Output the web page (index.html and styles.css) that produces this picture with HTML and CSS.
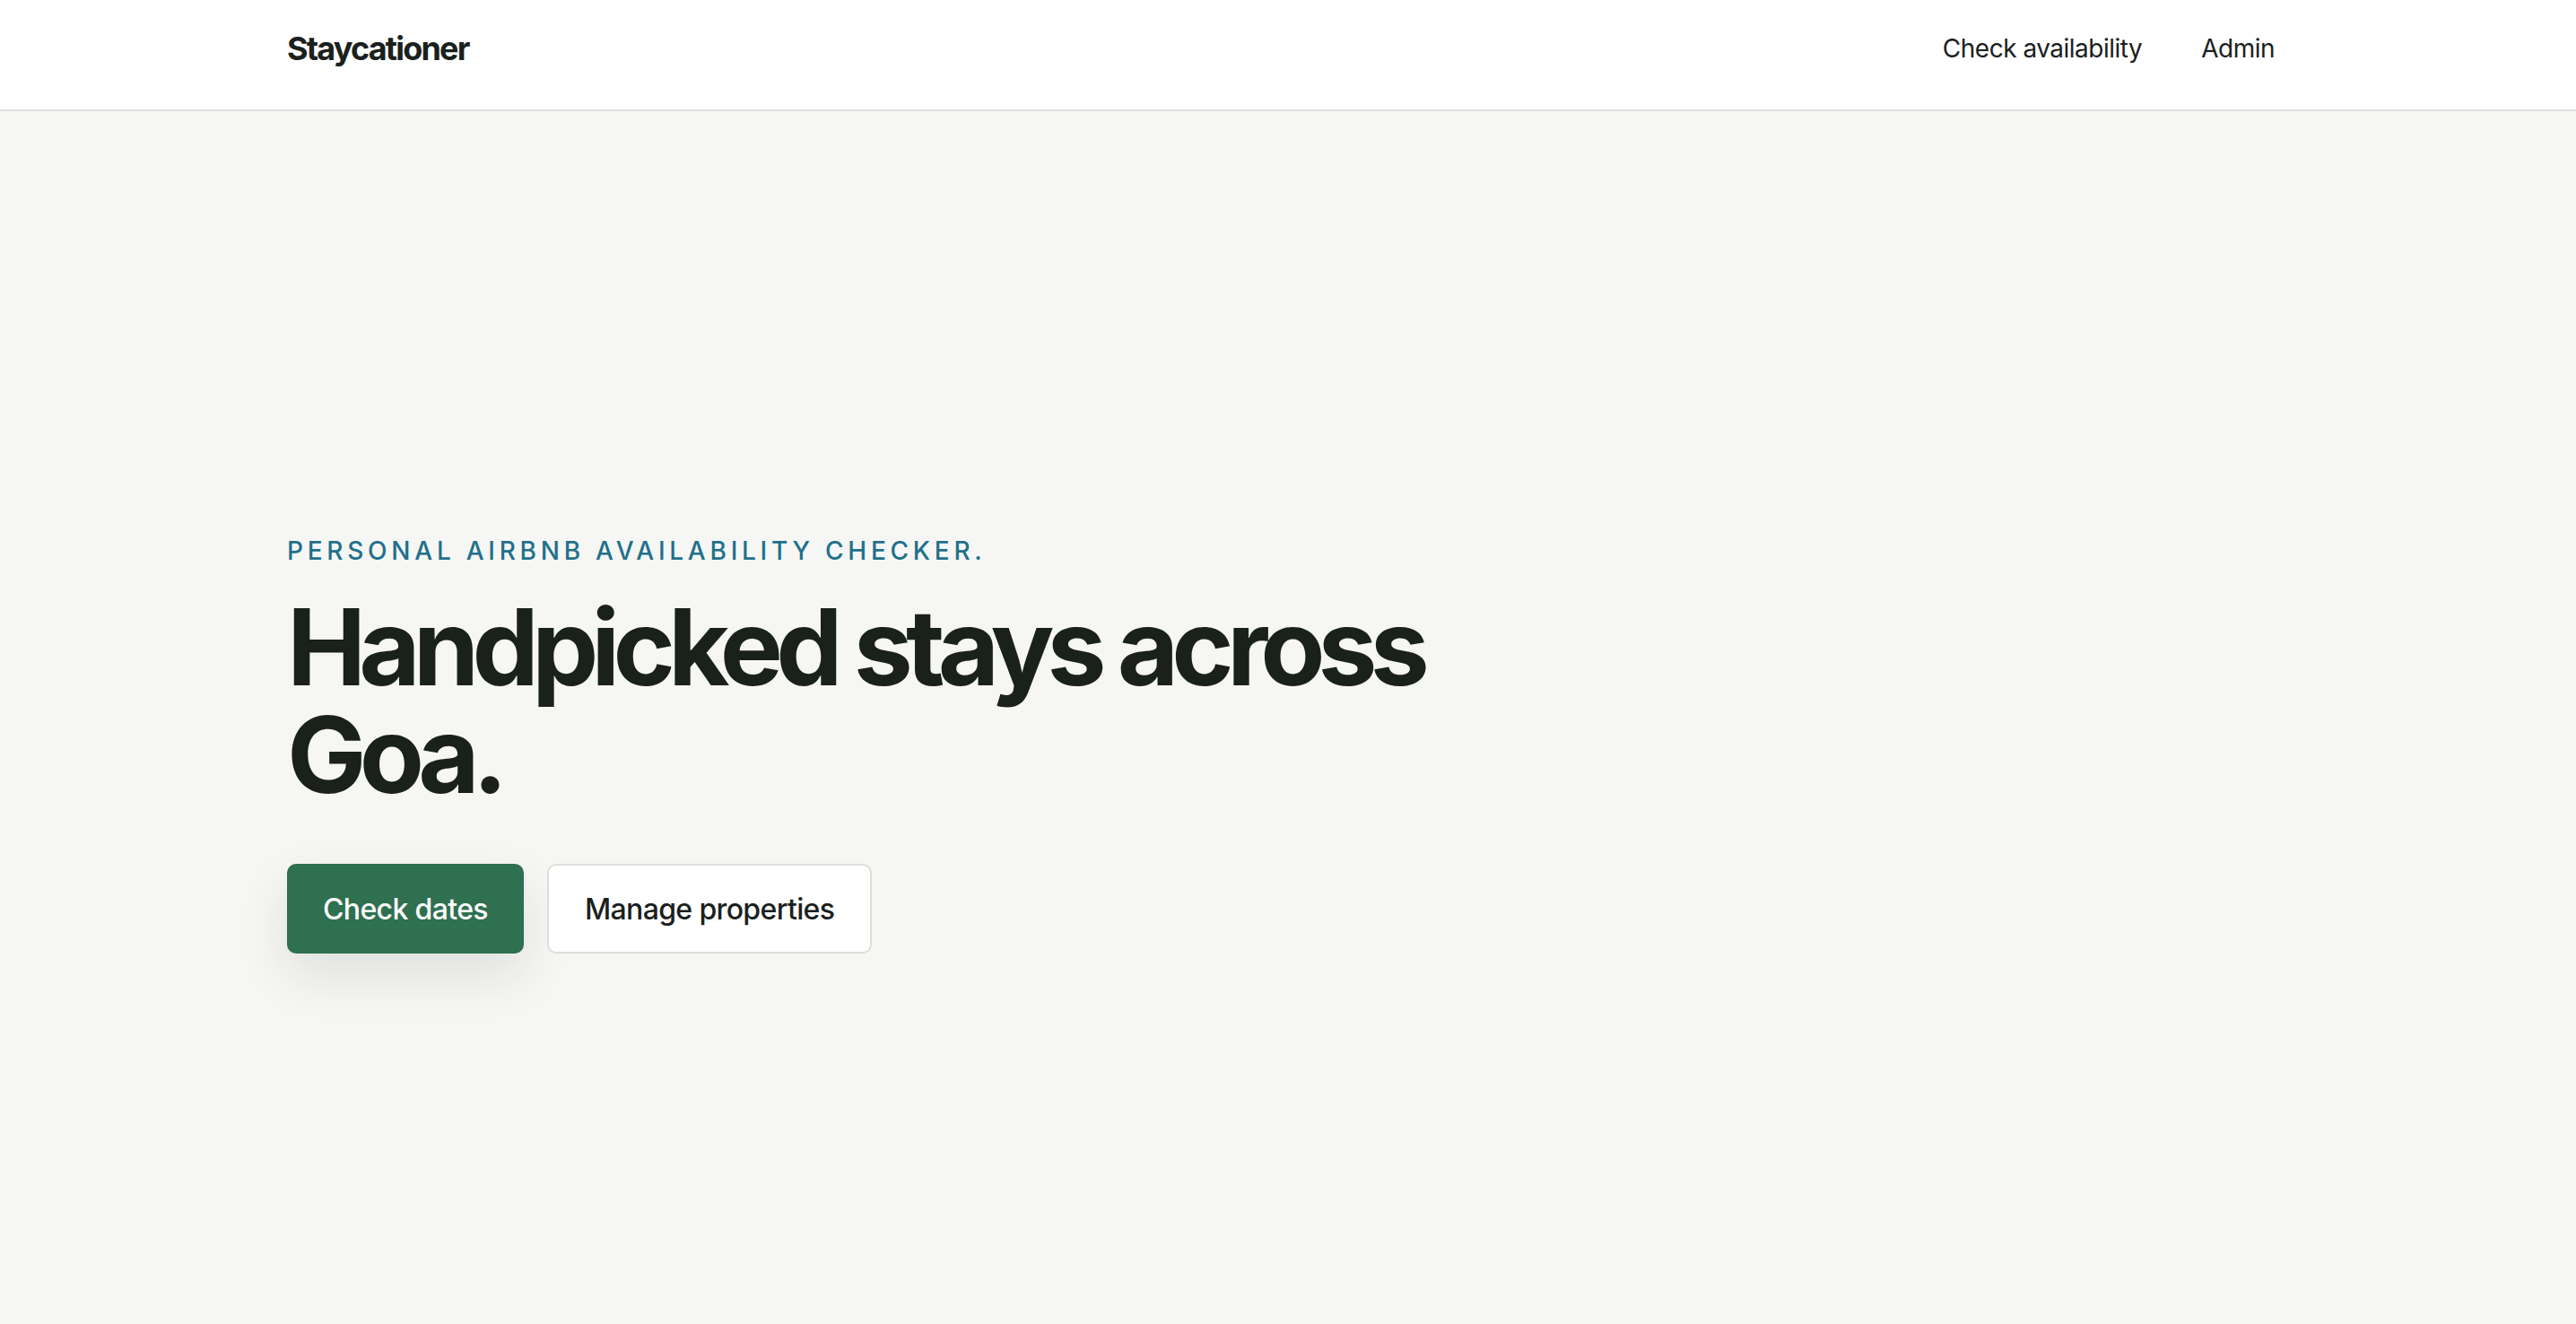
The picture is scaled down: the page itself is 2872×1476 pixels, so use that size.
FILE: index.html
```html
<!DOCTYPE html>
<html lang="en">
<head>
<meta charset="utf-8">
<title>Staycationer</title>
<link rel="stylesheet" href="styles.css">
</head>
<body>
<header class="site-header">
  <div class="container header-inner">
    <a class="logo" href="#">Staycationer</a>
    <nav class="nav">
      <a class="nav-link" href="#">Check availability</a>
      <a class="nav-link" href="#">Admin</a>
    </nav>
  </div>
</header>
<main class="hero">
  <div class="container hero-inner">
    <p class="eyebrow">Personal Airbnb availability checker.</p>
    <h1 class="headline">Handpicked stays across Goa.</h1>
    <div class="actions">
      <a class="btn btn-primary" href="#">Check dates</a>
      <a class="btn btn-secondary" href="#">Manage properties</a>
    </div>
  </div>
</main>
</body>
</html>
```
FILE: styles.css
```css
* { box-sizing: border-box; }
html, body { margin: 0; padding: 0; }
body {
  font-family: Inter, "Noto Sans", "Liberation Sans", sans-serif;
  color: #1a211d;
  background: #f6f6f4;
  min-height: 1476px;
}
a { text-decoration: none; color: inherit; }
.container {
  max-width: 2232px;
  margin: 0 auto;
}
.site-header {
  background: #ffffff;
  border-bottom: 2px solid #dfe2db;
}
.header-inner {
  height: 122px;
  padding-bottom: 14px;
  display: flex;
  align-items: center;
  justify-content: space-between;
}
.logo {
  font-size: 36px;
  font-weight: 700;
  letter-spacing: -0.05em;
}
.nav {
  display: flex;
  gap: 34px;
}
.nav-link {
  font-size: 28px;
  font-weight: 400;
  letter-spacing: -0.018em;
  padding: 0 16px;
}
.hero {
  padding-top: 469px;
}
.eyebrow {
  margin: 0;
  font-size: 28px;
  line-height: 42px;
  font-weight: 500;
  letter-spacing: 0.17em;
  text-transform: uppercase;
  color: #21708a;
}
.headline {
  margin: 26px 0 0;
  max-width: 1400px;
  font-size: 118px;
  line-height: 120px;
  font-weight: 700;
  letter-spacing: -0.067em;
  color: #1a211d;
}
.actions {
  margin-top: 62px;
  display: flex;
  gap: 26px;
}
.btn {
  display: inline-flex;
  align-items: center;
  justify-content: center;
  height: 100px;
  padding: 0 40px;
  font-size: 32px;
  font-weight: 500;
  letter-spacing: -0.02em;
  border-radius: 10px;
}
.btn-primary {
  background: #2e7050;
  color: #ffffff;
  box-shadow: 0 24px 56px rgba(30, 45, 35, 0.1);
}
.btn-secondary {
  background: #ffffff;
  color: #1a211d;
  border: 2px solid #dcdfd8;
}
```
